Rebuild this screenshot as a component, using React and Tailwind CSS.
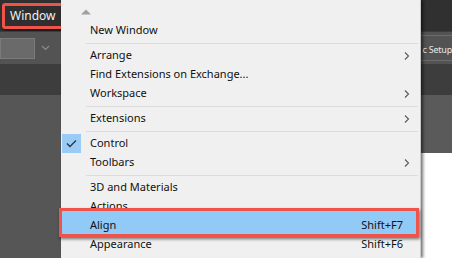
import React from 'react';

const font = { fontFamily: '"Noto Sans", "Open Sans", sans-serif' };

const Chevron = () => (
    <svg width="6" height="10" viewBox="0 0 6 10" className="text-[#5a5a5a]">
        <path d="M1 1.5 L4.5 5 L1 8.5" fill="none" stroke="currentColor" strokeWidth="1.1" />
    </svg>
);

const Sep = () => (
    <div className="h-[6px] flex items-center pl-[25px] pr-[2px]">
        <div className="h-px w-full bg-[#dcdcdc]" />
    </div>
);

const Item = ({ label, shortcut, sub, checked }) => (
    <div className="h-[19px] flex items-center">
        <div className="w-[25px] h-full flex items-center justify-start pl-px">
            {checked && (
                <div className="w-[19px] h-[19px] bg-[#99cbf5] flex items-center justify-center">
                    <svg width="11" height="9" viewBox="0 0 11 9">
                        <path d="M1 4.5 L4 7.5 L10 1.5" fill="none" stroke="#2d3a48" strokeWidth="1.4" />
                    </svg>
                </div>
            )}
        </div>
        <span className="pl-[4px] flex-1 text-[11px] text-[#111]">{label}</span>
        {shortcut && <span className="text-[11px] text-[#111] pr-[17px]">{shortcut}</span>}
        {sub && <span className="pr-[10px] flex items-center"><Chevron /></span>}
    </div>
);

export default function App() {
    return (
        <div className="relative w-[452px] h-[258px] overflow-hidden bg-[#545454]" style={font}>
            {/* app chrome behind the menu */}
            <div className="flex flex-col h-full">
                <div className="h-[31px] bg-[#303030] flex items-center pl-[2px]">
                    <div className="h-[26px] w-[64px] pl-[5px] flex items-center border-[3px] border-[#ef5349] rounded-[3px] shadow-[1px_2px_3px_rgba(0,0,0,0.6)] bg-[#2f2f2f]">
                        <span className="text-[12px] text-[#f2f2f2]">Window</span>
                    </div>
                </div>
                <div className="h-[33px] bg-[#535353] border-t border-[#3c3c3c] flex items-center relative">
                    <div className="w-[35px] h-[21px] bg-[#6a6a6a] border border-[#7b7b7b]" />
                    <div className="w-[20px] h-[21px] flex items-center justify-center">
                        <svg width="9" height="6" viewBox="0 0 9 6">
                            <path d="M1 1 L4.5 4.5 L8 1" fill="none" stroke="#8c8c8c" strokeWidth="1.2" />
                        </svg>
                    </div>
                    <div className="flex-1" />
                    <div className="h-[26px] border-y border-[#6c6c6c] flex items-center justify-end pt-[4px] w-[31px]">
                        <span className="text-[9px] tracking-[-0.2px] text-[#e8e8e8] whitespace-nowrap">c Setup</span>
                    </div>
                </div>
                <div className="h-[31px] bg-[#3d3d3d]" />
                <div className="flex-1 flex">
                    <div className="flex-1 bg-[#565656]" />
                    <div className="w-[31px] flex flex-col">
                        <div className="h-[58px] bg-[#5a5a5a]" />
                        <div className="flex-1 bg-white" />
                    </div>
                </div>
            </div>

            {/* dropdown menu */}
            <div className="absolute left-[61px] top-0 w-[360px] h-[258px] bg-[#f0f0f0] border-r border-[#c8c8c8] shadow-[2px_0_3px_rgba(0,0,0,0.55)] pt-[2px]">
                <div className="h-[19px] flex items-center pl-[20px]">
                    <svg width="10" height="6" viewBox="0 0 10 6">
                        <path d="M0 5.5 L5 0.5 L10 5.5 Z" fill="#a0a0a0" />
                    </svg>
                </div>
                <Item label="New Window" />
                <Sep />
                <Item label="Arrange" sub />
                <Item label="Find Extensions on Exchange..." />
                <Item label="Workspace" sub />
                <Sep />
                <Item label="Extensions" sub />
                <Sep />
                <Item label="Control" checked />
                <Item label="Toolbars" sub />
                <Sep />
                <Item label="3D and Materials" />
                <Item label="Actions" />
                <div className="relative h-[19px] flex items-center">
                    <div className="absolute -left-[2px] right-[1px] -top-[8px] -bottom-[2px] border-[3px] border-[#ef5349] bg-[#91c9f7] shadow-[1px_2px_3px_rgba(0,0,0,0.55)]" />
                    <span className="relative pl-[29px] flex-1 text-[11px] text-[#111]">Align</span>
                    <span className="relative text-[11px] text-[#111] pr-[17px]">Shift+F7</span>
                </div>
                <Item label="Appearance" shortcut="Shift+F6" />
            </div>
        </div>
    );
}
